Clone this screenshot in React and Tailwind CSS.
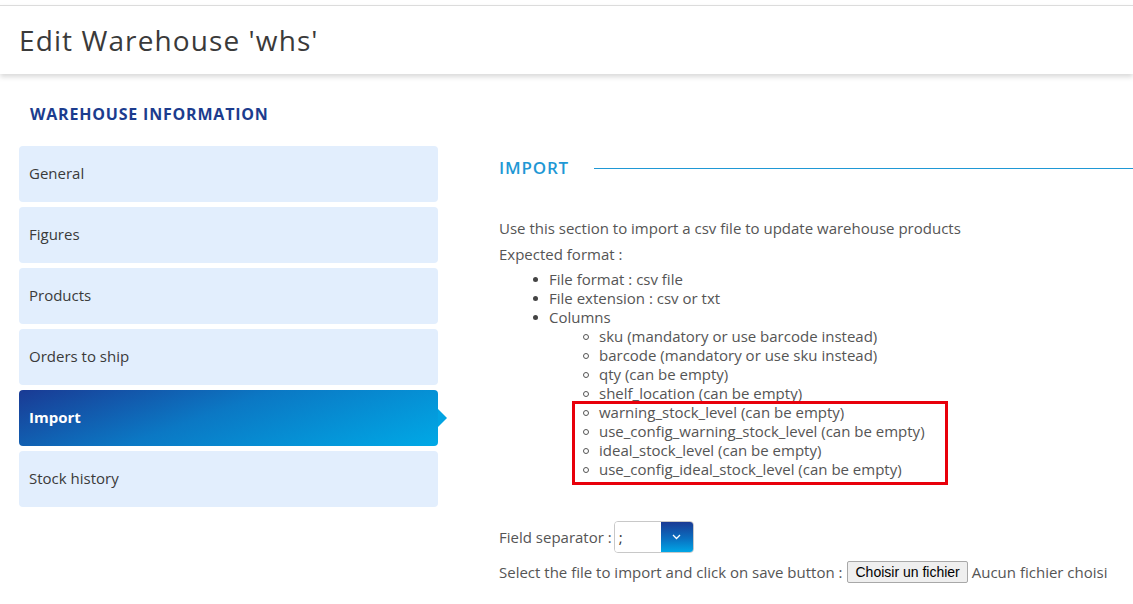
import React from "react";

const items = ["General", "Figures", "Products", "Orders to ship", "Import", "Stock history"];

const columns = [
  "sku (mandatory or use barcode instead)",
  "barcode (mandatory or use sku instead)",
  "qty (can be empty)",
  "shelf_location (can be empty)",
];
const boxed = [
  "warning_stock_level (can be empty)",
  "use_config_warning_stock_level (can be empty)",
  "ideal_stock_level (can be empty)",
  "use_config_ideal_stock_level (can be empty)",
];

function Circle() {
  return <span className="inline-block w-[6px] h-[6px] rounded-full border border-[#555] mr-[10px] shrink-0" />;
}

function Disc() {
  return <span className="inline-block w-[5px] h-[5px] rounded-full bg-[#444] mr-[11px] shrink-0" />;
}

export default function App() {
  return (
    <div className="w-[1133px] h-[604px] overflow-hidden bg-white font-['Open_Sans',sans-serif] text-[#555]">
      <div className="h-[5px] bg-white" />
      <div className="h-[69px] border-t border-[#dcdcdc] bg-white shadow-[0_3px_5px_rgba(0,0,0,0.15)] relative z-10 flex items-center pl-[19px]">
        <h1 className="text-[28px] text-[#3a3a3a] font-normal tracking-[1.1px]">Edit Warehouse 'whs'</h1>
      </div>
      <div className="flex pl-[19px]">
        <div className="w-[419px] shrink-0">
          <div className="h-[72px] flex items-center pl-[11px] pt-[8px]">
            <h2 className="text-[16px] font-bold text-[#1c3c8e] tracking-[0.8px]">WAREHOUSE INFORMATION</h2>
          </div>
          <div className="flex flex-col gap-[5px]">
            {items.map((it) =>
              it === "Import" ? (
                <div key={it} className="relative h-[56px] rounded-[4px] bg-[linear-gradient(160deg,#1a3a94_0%,#0b78c4_45%,#00a9e6_100%)] flex items-center pl-[10px] pb-[1px]">
                  <span className="text-[15px] font-bold text-white">{it}</span>
                  <span className="absolute right-[-9px] top-[19px] w-0 h-0 border-y-[9px] border-y-transparent border-l-[9px] border-l-[#02a3e2]" />
                </div>
              ) : (
                <div key={it} className="h-[56px] rounded-[4px] bg-[#e2eefd] flex items-center pl-[10px] pb-[1px]">
                  <span className="text-[15px] text-[#3a3a3a]">{it}</span>
                </div>
              )
            )}
          </div>
        </div>
        <div className="ml-[61px] flex-1">
          <div className="h-[48px] mt-[70px] flex items-center">
            <span className="text-[17px] font-semibold text-[#1f98d5] tracking-[0.8px]">IMPORT</span>
            <div className="flex-1 h-px bg-[#1f98d5] ml-[25px]" />
          </div>
          <div className="text-[15px] leading-[19px]">
            <div className="mt-[27px] h-[19px]">Use this section to import a csv file to update warehouse products</div>
            <div className="mt-[7px] h-[19px]">Expected format :</div>
            <ul className="mt-[6px] pl-[34px]">
              <li className="flex items-center h-[19px]"><Disc />File format : csv file</li>
              <li className="flex items-center h-[19px]"><Disc />File extension : csv or txt</li>
              <li className="flex items-center h-[19px]"><Disc />Columns</li>
            </ul>
            <ul className="pl-[84px]">
              {columns.map((c) => (
                <li key={c} className="flex items-center h-[19px]"><Circle />{c}</li>
              ))}
            </ul>
            <div className="relative ml-[84px]">
              {boxed.map((c) => (
                <div key={c} className="flex items-center h-[19px]"><Circle />{c}</div>
              ))}
              <div className="absolute left-[-11px] top-[-2px] bottom-[-6px] w-[376px] border-[3px] border-[#e8000b] pointer-events-none" />
            </div>
          </div>
          <div className="mt-[42px] flex items-center h-[32px] text-[15px]">
            <span>Field separator :</span>
            <div className="ml-[2px] w-[80px] h-[32px] rounded-[4px] border border-[#c8c8c8] flex overflow-hidden">
              <div className="flex-1 bg-white pl-[4px] flex items-center text-[#333]">;</div>
              <div className="w-[32px] bg-[linear-gradient(180deg,#1a3a94_0%,#0a6fc0_55%,#00a6e6_100%)] flex items-center justify-center">
                <svg width="9" height="6" viewBox="0 0 9 6"><path d="M1 1l3.5 3.5L8 1" stroke="#fff" strokeWidth="1.3" fill="none" /></svg>
              </div>
            </div>
          </div>
          <div className="mt-[7px] flex items-center h-[24px] text-[15px]">
            <span>Select the file to import and click on save button :</span>
            <button className="ml-[5px] h-[22px] px-[7px] border border-[#a8a8a8] rounded-[2px] bg-[#efefef] font-['Liberation_Sans',Arial,sans-serif] text-[14px] text-black">Choisir un fichier</button>
            <span className="ml-[4px]">Aucun fichier choisi</span>
          </div>
        </div>
      </div>
    </div>
  );
}
